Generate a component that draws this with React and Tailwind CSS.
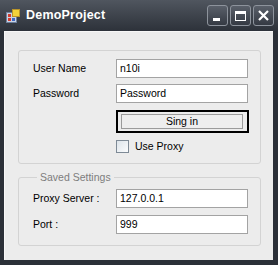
const font = "font-['Liberation_Sans',Arial,sans-serif]";

function AppIcon() {
  return (
    <svg width="14" height="14" viewBox="0 0 14 14">
      <rect x="0.5" y="3.5" width="10" height="10" fill="#c9d3e3" stroke="#6d7f9c" />
      <rect x="2" y="5" width="3" height="3" fill="#d23b2e" />
      <rect x="2" y="9" width="3" height="3" fill="#d23b2e" />
      <rect x="6" y="9" width="3" height="3" fill="#3d68c2" />
      <rect x="6.5" y="0.5" width="7" height="7" fill="#f2d23a" stroke="#b8942a" />
    </svg>
  );
}

function CaptionButton({ children }) {
  return (
    <div className="w-[21px] h-[21px] rounded-[3px] border border-[#8d939c] bg-gradient-to-b from-[#5a606a] to-[#353a43] flex items-center justify-center">
      {children}
    </div>
  );
}

function Field({ label, value }) {
  return (
    <div className="flex items-center">
      <span className="w-[83px] text-[10.5px] text-black leading-none">{label}</span>
      <div className="h-[19px] w-[132px] border border-[#a3a3a3] bg-white pl-[3px] flex items-center text-[10.5px] text-black leading-none">
        {value}
      </div>
    </div>
  );
}

export default function App() {
  return (
    <div className={`${font} w-[278px] h-[265px] bg-[#2b3038] flex flex-col`}>
      <div className="h-[31px] shrink-0 flex items-center bg-gradient-to-b from-[#50565f] to-[#2d323a] pl-[6px] pr-[4px]">
        <AppIcon />
        <span className="ml-[6px] text-white font-bold text-[12.5px] tracking-[0.2px]">DemoProject</span>
        <div className="ml-auto flex gap-[2px]">
          <CaptionButton>
            <div className="w-[7px] h-[3px] bg-white mt-[8px] -ml-[3px]" />
          </CaptionButton>
          <CaptionButton>
            <div className="w-[11px] h-[10px] border border-white border-t-[3px]" />
          </CaptionButton>
          <CaptionButton>
            <svg width="11" height="11" viewBox="0 0 11 11">
              <path d="M1 1 L10 10 M10 1 L1 10" stroke="white" strokeWidth="2.2" />
            </svg>
          </CaptionButton>
        </div>
      </div>
      <div className="flex-1 flex px-[4px] pr-[5px] pb-[5px]">
        <div className="flex-1 bg-[#ececec] border-l border-t border-[#f7f7f7] pl-[13px] pt-[18px] flex flex-col">
          <div className="w-[243px] h-[114px] rounded-[3px] border border-[#d3d3d3] pl-[14px] pt-[8px] flex flex-col">
            <Field label="User Name" value="n10i" />
            <div className="mt-[6px]">
              <Field label="Password" value="Password" />
            </div>
            <div className="mt-[7px] ml-[83px] w-[133px] h-[23px] border-2 border-black p-[2px]">
              <div className="relative h-full border border-[#9b9b9b] bg-[#eeeeee] flex items-center justify-center text-[10.5px] text-black leading-none mr-[2px] ml-[1px]">
                Sing in
              </div>
            </div>
            <div className="mt-[7px] ml-[83px] flex items-center">
              <div className="w-[13px] h-[13px] border border-[#7e8a96] bg-gradient-to-br from-[#dde4ea] to-[#fbfcfd]" />
              <span className="ml-[6px] text-[10.5px] text-black leading-none">Use Proxy</span>
            </div>
          </div>
          <fieldset className="mt-[7px] w-[243px] h-[75px] rounded-[3px] border border-[#d3d3d3] pl-[14px] pb-[10px]">
            <legend className="ml-[4px] px-[3px] text-[10.5px] leading-[12px] text-[#7d7d7d]">Saved Settings</legend>
            <div className="mt-[6px]">
              <Field label="Proxy Server :" value="127.0.0.1" />
            </div>
            <div className="mt-[7px]">
              <Field label="Port :" value="999" />
            </div>
          </fieldset>
        </div>
      </div>
    </div>
  );
}
